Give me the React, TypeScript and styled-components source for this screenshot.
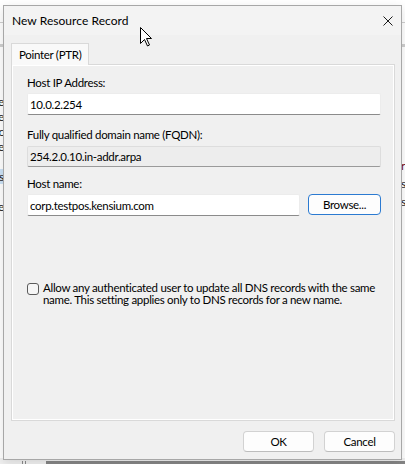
import React from "react";
import styled, { createGlobalStyle } from "styled-components";

const UI_FONT = `Lato, "Liberation Sans", sans-serif`;

const GlobalStyle = createGlobalStyle`
  html, body { margin: 0; padding: 0; background: #ffffff; }
  body { font-family: ${UI_FONT}; font-size: 11.5px; letter-spacing: -0.3px; color: #000; }
  * { box-sizing: border-box; }
`;

/* ---------- desktop and the application window behind the dialog ---------- */

const Desktop = styled.div`
  position: relative;
  width: 405px;
  height: 464px;
  overflow: hidden;
  background: #ffffff;
  padding: 5px 0 0 3px;
`;

const BackApp = styled.div`
  position: absolute;
  inset: 0;
  z-index: 0;
`;

const BackRule = styled.div<{ $top: number; $h?: number }>`
  position: absolute;
  left: 0;
  right: 0;
  top: ${(p) => p.$top}px;
  height: ${(p) => p.$h ?? 1}px;
  background: #cfcfcf;
`;

const BackList = styled.div<{ $side: "left" | "right"; $top: number; $row: number }>`
  position: absolute;
  top: ${(p) => p.$top}px;
  ${(p) => (p.$side === "left" ? "left: -60px; text-align: right;" : "left: 401px;")}
  width: 64px;
  display: flex;
  flex-direction: column;
  font-size: 12px;
  line-height: ${(p) => p.$row}px;
  color: #1a1a1a;
  white-space: nowrap;
  & > * {
    height: ${(p) => p.$row}px;
  }
`;

const BackItem = styled.div<{ $selected?: boolean; $color?: string }>`
  background: ${(p) => (p.$selected ? "#cde3f7" : "transparent")};
  color: ${(p) => p.$color ?? "#1a1a1a"};
`;

const BackStatus = styled.div`
  position: absolute;
  left: 0;
  right: 0;
  bottom: 0;
  height: 6px;
  background: #f0f0f0;
  display: flex;
  align-items: flex-end;
  padding-left: 22px;
  gap: 2px;
`;

const Splitter = styled.div`
  width: 1px;
  height: 3px;
  background: #8a8a8a;
`;

const ScrollTrack = styled.div`
  margin-left: 18px;
  flex: 1;
  height: 3px;
  background: #868686;
`;

/* ---------- dialog window ---------- */

const Dialog = styled.div`
  position: relative;
  z-index: 1;
  width: 399px;
  height: 455px;
  border: 1px solid #a7a7a7;
  background: #f0f0f0;
  display: flex;
  flex-direction: column;
  box-shadow: 0 3px 10px rgba(0, 0, 0, 0.12);
`;

const TitleBar = styled.div`
  height: 29px;
  flex: none;
  background: #f3f3f3;
  display: flex;
  align-items: center;
  justify-content: space-between;
  padding: 0 8px 0 8px;
`;

const Title = styled.span`
  font-size: 12px;
  letter-spacing: 0.05px;
  color: #000;
`;

const CloseGlyph = styled.svg`
  display: block;
`;

const Body = styled.div`
  flex: 1;
  display: flex;
  flex-direction: column;
  padding: 8px 6px 7px 7px;
`;

const TabStrip = styled.div`
  display: flex;
  height: 21px;
  flex: none;
`;

const Tab = styled.div<{ $active?: boolean }>`
  height: 22px;
  padding: 0 7px;
  display: flex;
  align-items: center;
  border: 1px solid #d9d9d9;
  border-bottom: none;
  background: ${(p) => (p.$active ? "#f9f9f9" : "#f0f0f0")};
  position: relative;
  z-index: 1;
`;

const TabPanel = styled.div`
  height: 357px;
  flex: none;
  border: 1px solid #d9d9d9;
  box-shadow: inset 1px 1px 0 #ffffff, inset -1px -1px 0 #ffffff;
  background: #f0f0f0;
  padding: 10px 13px 0 15px;
  display: flex;
  flex-direction: column;
`;

const FieldLabel = styled.label<{ $gap?: number }>`
  display: block;
  line-height: 15px;
  height: 15px;
  margin-bottom: ${(p) => p.$gap ?? 3}px;
`;

const TextBox = styled.input<{ $height?: number }>`
  display: block;
  width: 100%;
  height: ${(p) => p.$height ?? 22}px;
  margin: 0;
  padding: 0 2px;
  font-family: ${UI_FONT};
  font-size: 11.5px;
  letter-spacing: -0.3px;
  color: #000;
  background: #ffffff;
  border: 1px solid #ececec;
  border-bottom-color: #8b8b8b;
  border-radius: 2px;
  outline: none;
  &:read-only {
    background: #ededed;
    border-color: #dddddd;
    border-bottom-color: #9a9a9a;
  }
`;

const FieldGroup = styled.div<{ $mb: number }>`
  display: flex;
  flex-direction: column;
  margin-bottom: ${(p) => p.$mb}px;
`;

const InlineRow = styled.div`
  display: flex;
  align-items: flex-start;
  gap: 8px;
`;

const PushButton = styled.button<{ $default?: boolean; $w?: number }>`
  width: ${(p) => p.$w ?? 71}px;
  height: 21px;
  flex: none;
  margin: 0;
  padding: 0;
  font-family: ${UI_FONT};
  font-size: 11.5px;
  letter-spacing: -0.3px;
  color: #000;
  background: #fdfdfd;
  border: 1px solid ${(p) => (p.$default ? "#2b7ad1" : "#d2d2d2")};
  border-bottom-color: ${(p) => (p.$default ? "#2b7ad1" : "#bdbdbd")};
  border-radius: 4px;
`;

const CheckRow = styled.label`
  display: flex;
  align-items: flex-start;
  gap: 4px;
  margin-top: 66px;
`;

const CheckBox = styled.span`
  flex: none;
  width: 12px;
  height: 12px;
  margin-top: 1px;
  border: 1px solid #5b5b5b;
  border-radius: 3px;
  background: #f6f6f6;
`;

const CheckText = styled.span`
  flex: 1;
  line-height: 12px;
`;

const ButtonRow = styled.div`
  display: flex;
  justify-content: flex-end;
  gap: 10px;
  margin-top: 10px;
`;

const CursorLayer = styled.div`
  position: absolute;
  left: 140px;
  top: 27px;
  z-index: 5;
  pointer-events: none;
`;

export default function App() {
  return (
    <>
      <GlobalStyle />
      <Desktop>
        <BackApp>
          <BackRule $top={22} />
          <BackRule $top={44} $h={3} />
          <BackList $side="left" $top={94} $row={15}>
            <BackItem>Name</BackItem>
            <BackItem>Type</BackItem>
            <BackItem>Sync</BackItem>
            <BackItem>Name</BackItem>
            <BackItem />
            <BackItem $selected>Alias</BackItem>
            <BackItem />
            <BackItem>Type</BackItem>
          </BackList>
          <BackList $side="right" $top={157} $row={18}>
            <BackItem $color="#7a1010">r</BackItem>
            <BackItem>s</BackItem>
            <BackItem>s</BackItem>
          </BackList>
          <BackStatus>
            <Splitter />
            <Splitter />
            <ScrollTrack />
          </BackStatus>
        </BackApp>

        <Dialog>
          <TitleBar>
            <Title>New Resource Record</Title>
            <CloseGlyph width="10" height="10" viewBox="0 0 10 10">
              <path d="M0.5 0.5 L9.5 9.5 M9.5 0.5 L0.5 9.5" stroke="#1b1b1b" strokeWidth="1" />
            </CloseGlyph>
          </TitleBar>
          <Body>
            <TabStrip>
              <Tab $active>Pointer (PTR)</Tab>
            </TabStrip>
            <TabPanel>
              <FieldGroup $mb={12}>
                <FieldLabel>Host IP Address:</FieldLabel>
                <TextBox defaultValue="10.0.2.254" />
              </FieldGroup>
              <FieldGroup $mb={9}>
                <FieldLabel $gap={4}>Fully qualified domain name (FQDN):</FieldLabel>
                <TextBox $height={21} readOnly defaultValue="254.2.0.10.in-addr.arpa" />
              </FieldGroup>
              <FieldGroup $mb={0}>
                <FieldLabel>Host name:</FieldLabel>
                <InlineRow>
                  <TextBox defaultValue="corp.testpos.kensium.com" />
                  <PushButton $default $w={73}>Browse...</PushButton>
                </InlineRow>
              </FieldGroup>
              <CheckRow>
                <CheckBox />
                <CheckText>
                  Allow any authenticated user to update all DNS records with the same name. This
                  setting applies only to DNS records for a new name.
                </CheckText>
              </CheckRow>
            </TabPanel>
            <ButtonRow>
              <PushButton>OK</PushButton>
              <PushButton>Cancel</PushButton>
            </ButtonRow>
          </Body>
        </Dialog>

        <CursorLayer>
          <svg width="13" height="20" viewBox="0 0 13 20">
            <path
              d="M0.5 0.5 V16.5 L4.5 12.5 L7.5 19 L9.5 18 L6.5 11.5 H11.5 Z"
              fill="#ffffff"
              stroke="#000000"
              strokeWidth="1"
            />
          </svg>
        </CursorLayer>
      </Desktop>
    </>
  );
}
